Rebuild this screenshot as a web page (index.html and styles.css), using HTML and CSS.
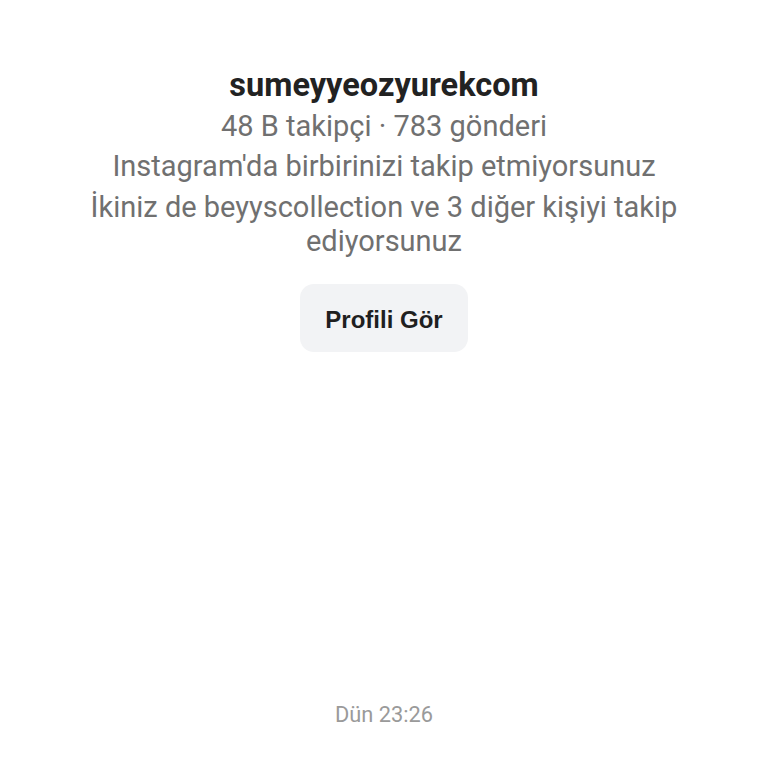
FILE: index.html
```html
<!DOCTYPE html>
<html lang="tr">
<head>
<meta charset="utf-8">
<link rel="stylesheet" href="styles.css">
</head>
<body>
<main class="page">
  <section class="profile">
    <h1 class="name">sumeyyeozyurekcom</h1>
    <p class="line stats">48 B takipçi · 783 gönderi</p>
    <p class="line">Instagram'da birbirinizi takip etmiyorsunuz</p>
    <p class="line mutual">İkiniz de beyyscollection ve 3 diğer kişiyi takip ediyorsunuz</p>
    <button class="view-btn">Profili Gör</button>
  </section>
  <div class="time">Dün 23:26</div>
</main>
</body>
</html>
```
FILE: styles.css
```css
* { box-sizing: border-box; }
html, body { margin: 0; padding: 0; background: #ffffff; }
body { width: 768px; height: 768px; overflow: hidden; font-family: Roboto, "Noto Sans", sans-serif; }
.page { display: flex; flex-direction: column; align-items: center; height: 768px; }
.profile { display: flex; flex-direction: column; align-items: center; padding-top: 66px; width: 100%; }
.name { margin: 0; font-size: 32.5px; font-weight: 700; color: #222222; line-height: 38px; }
.line { margin: 0; font-size: 29px; color: #707070; line-height: 40px; text-align: center; }
.stats { margin-top: 2px; }
.mutual { width: 640px; line-height: 34px; margin-top: 4px; }
.view-btn { margin-top: 26px; width: 168px; height: 68px; padding: 3px 0 0; border: none; border-radius: 14px; background: #f2f3f5; font-family: "Liberation Sans", Arial, sans-serif; font-weight: 700; font-size: 24px; color: #1f1f1f; }
.time { margin-top: auto; margin-bottom: 41px; font-size: 21.8px; color: #9a9a9a; }
```
